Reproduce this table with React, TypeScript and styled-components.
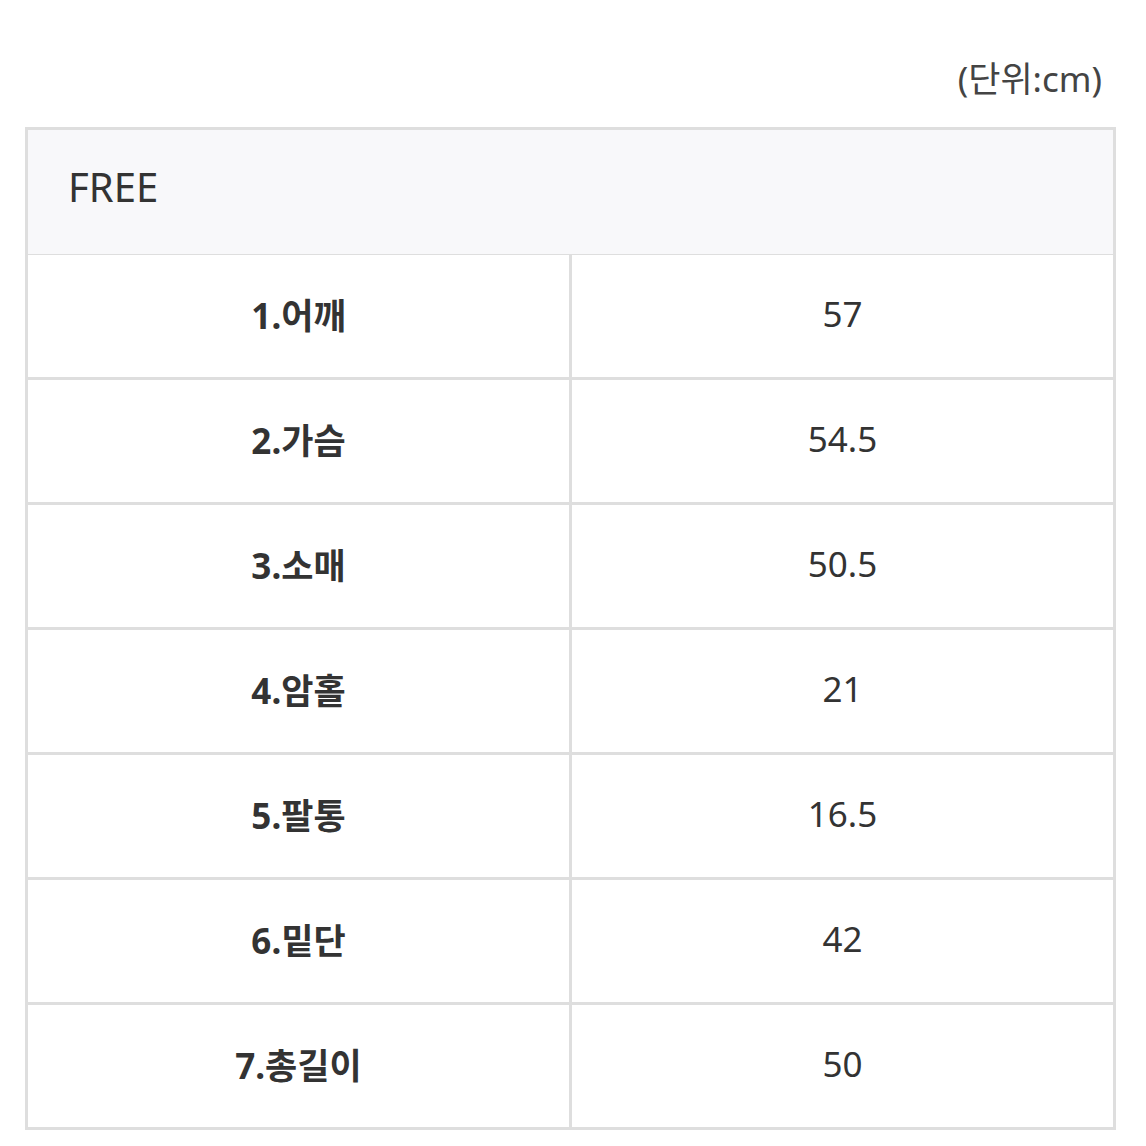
import React from "react";
import styled, { createGlobalStyle } from "styled-components";

const GlobalStyle = createGlobalStyle`
  html, body {
    margin: 0;
    padding: 0;
    background: #ffffff;
  }
  body {
    font-family: "Noto Sans", "Noto Sans CJK KR", sans-serif;
    color: #333333;
  }
`;

const Page = styled.div`
  width: 1146px;
  padding: 56px 25px 0 25px;
  box-sizing: border-box;
`;

const Unit = styled.div`
  text-align: right;
  font-size: 35px;
  line-height: 46px;
  color: #444444;
  padding-right: 19px;
  margin-bottom: 25px;
`;

const Table = styled.div`
  display: grid;
  grid-template-columns: 1fr 1fr;
  grid-auto-rows: 122px;
  gap: 3px;
  padding: 3px;
  background: #dedede;
  width: 1091px;
  box-sizing: border-box;
`;

const HeaderCell = styled.div`
  grid-column: 1 / span 2;
  height: 124px;
  background: #f8f8fa;
  display: flex;
  align-items: center;
  padding: 0 0 12px 40px;
  box-sizing: border-box;
  font-size: 40px;
  color: #333333;
`;

const Cell = styled.div<{ $bold?: boolean }>`
  background: #ffffff;
  display: flex;
  align-items: center;
  justify-content: center;
  padding-bottom: 6px;
  box-sizing: border-box;
  font-size: 35px;
  font-weight: ${(props) => (props.$bold ? 700 : 400)};
  color: #333333;
`;

const rows = [
  ["1.어깨", "57"],
  ["2.가슴", "54.5"],
  ["3.소매", "50.5"],
  ["4.암홀", "21"],
  ["5.팔통", "16.5"],
  ["6.밑단", "42"],
  ["7.총길이", "50"],
];

const App = () => {
  return (
    <>
      <GlobalStyle />
      <Page>
        <Unit>(단위:cm)</Unit>
        <Table>
          <HeaderCell>FREE</HeaderCell>
          {rows.map(([label, value]) => (
            <React.Fragment key={label}>
              <Cell $bold>{label}</Cell>
              <Cell>{value}</Cell>
            </React.Fragment>
          ))}
        </Table>
      </Page>
    </>
  );
};

export default App;
